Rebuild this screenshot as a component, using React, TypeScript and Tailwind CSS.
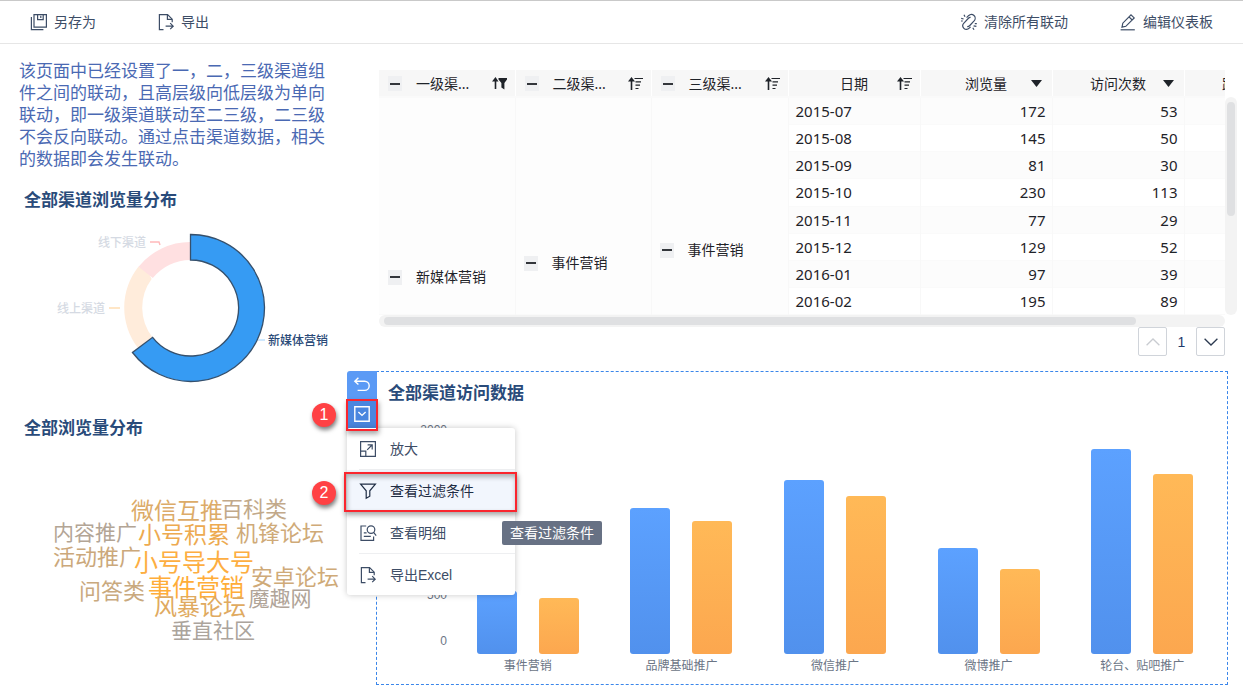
import React from 'react';

interface Row {
  date: string;
  views: number;
  visits: number;
}

interface Word {
  text: string;
  x: number;
  y: number;
  size: number;
  color: string;
}

const rows: Row[] = [
  { date: '2015-07', views: 172, visits: 53 },
  { date: '2015-08', views: 145, visits: 50 },
  { date: '2015-09', views: 81, visits: 30 },
  { date: '2015-10', views: 230, visits: 113 },
  { date: '2015-11', views: 77, visits: 29 },
  { date: '2015-12', views: 129, visits: 52 },
  { date: '2016-01', views: 97, visits: 39 },
  { date: '2016-02', views: 195, visits: 89 },
];

// bar heights in pixels
const channels = [
  { name: '事件营销', views: 63, visits: 56 },
  { name: '品牌基础推广', views: 146, visits: 133 },
  { name: '微信推广', views: 174, visits: 158 },
  { name: '微博推广', views: 106, visits: 85 },
  { name: '轮台、贴吧推广', views: 205, visits: 180 },
];

const words: Word[] = [
  { text: '微信互推', x: 177, y: 31, size: 23, color: '#dcab68' },
  { text: '百科类', x: 254, y: 29, size: 22, color: '#c2a98a' },
  { text: '内容推广', x: 95, y: 52, size: 21, color: '#b3a595' },
  { text: '小号积累', x: 184, y: 55, size: 23, color: '#edaa50' },
  { text: '机锋论坛', x: 280, y: 53, size: 22, color: '#cfaa78' },
  { text: '活动推广', x: 97, y: 77, size: 22, color: '#cba87b' },
  { text: '小号导大号', x: 194, y: 82, size: 24, color: '#fdae41' },
  { text: '安卓论坛', x: 295, y: 97, size: 22, color: '#cfaa78' },
  { text: '事件营销', x: 196, y: 107, size: 24, color: '#ffad38' },
  { text: '问答类', x: 112, y: 111, size: 22, color: '#c9a97e' },
  { text: '魔趣网', x: 280, y: 118, size: 21, color: '#b0a498' },
  { text: '风暴论坛', x: 200, y: 127, size: 23, color: '#e0aa60' },
  { text: '垂直社区', x: 213, y: 150, size: 21, color: '#aba49c' },
];

const iconProps = {
  width: 18,
  height: 18,
  viewBox: '0 0 18 18',
  fill: 'none',
  stroke: 'currentColor',
  strokeWidth: 1.2,
  'aria-hidden': true,
};

const SaveAsIcon = () => (
  <svg {...iconProps}>
    <path d="M4 1.6h12.4v12.6H4z" />
    <path d="M7.6 1.6v5h5.6v-5M10.8 2.8v2.2" />
    <path d="M1.4 4v12.6h12" />
  </svg>
);

const ExportIcon = () => (
  <svg {...iconProps}>
    <path d="M6.5 16.6H2.4V1.6h8.2l4.6 4.6v3" />
    <path d="M10.4 1.8v4.6h4.6" />
    <path d="M8.6 13.2h7.2M13.2 10.2l3 3-3 3" />
  </svg>
);

const UnlinkIcon = () => (
  <svg {...iconProps}>
    <path d="M6.6 4.6l1.9-1.9c1.6-1.5 4-1.6 5.5-.2s1.5 3.8.1 5.4l-4.3 4.6c-.9 1-1.7 1.3-2.6 1.2" />
    <path d="M10.6 13.8l-1.4 1.4c-1.5 1.5-3.9 1.5-5.3.1s-1.4-3.700 0-5.200l4.300-4.600c.8-.9 1.500-1.200 2.400-1.100" />
    <path d="M1.200 5.400l2.400.6M4 1.800l1 2M1 8h1.800M13.600 12.800l2.800.6M12.800 14.800l1.200 2M14.800 10.600h2" />
  </svg>
);

const EditIcon = () => (
  <svg {...iconProps}>
    <path d="M3 14.2l.8-4L12 1.8l3.2 3.1-8.4 8.4-3.8.9zM10 3.8l3.2 3.2" />
    <path d="M1.6 16.8h14.2" />
  </svg>
);

const EnlargeIcon = () => (
  <svg {...iconProps}>
    <path d="M1.6 11.2V1.6h14.8v14.8H6.8" />
    <path d="M1.6 11.2h5.2v5.2H1.6z" />
    <path d="M8.2 9.8l4.8-4.8M8.6 4.8h4.6v4.6" />
  </svg>
);

const FilterIcon = () => (
  <svg {...iconProps}>
    <path d="M1.600 2.200h14.800l-5.600 6.600v5.400l-3.600 2V8.800z" />
  </svg>
);

const DetailIcon = () => (
  <svg {...iconProps}>
    <path d="M7.2 2H2v14.4h12.6v-4" />
    <circle cx="12" cy="5.6" r="3.8" />
    <path d="M14.6 8.4l2.6 3.2M4.8 8.8h2.8M4.8 12.4h7" />
  </svg>
);

const SortIcon = () => (
  <svg width="15" height="13" viewBox="0 0 15 13" fill="none" stroke="#1f2329" aria-hidden="true">
    <path d="M3.5 13V3" strokeWidth="1.6" />
    <path d="M0 4.5L3.5 0 7 4.5z" fill="#1f2329" stroke="none" />
    <path d="M6.5 1.5H15M7.5 4.8H13M7.5 8.2H12M7.5 11.5H10.5" strokeWidth="1.2" />
  </svg>
);

const SortFilterIcon = () => (
  <svg width="15" height="13" viewBox="0 0 15 13" fill="#1f2329" aria-hidden="true">
    <path d="M0 4.5L3.5 0 6.5 4.5H4.3V12H2.7V4.5z" />
    <path d="M6.5 1H15v1.600L12.400 6v6.500L9.400 10.500V6L6.500 2.600z" />
  </svg>
);

const CaretIcon = () => (
  <svg width="11" height="7" viewBox="0 0 11 7" fill="#1f2329" className="mr-[2px]" aria-hidden="true">
    <path d="M0 0h11L5.500 7z" />
  </svg>
);

const Collapse = () => (
  <button aria-label="收起" className="flex h-[15px] w-[14px] shrink-0 items-center justify-center bg-[#eff0f2]">
    <span className="h-[2px] w-[10px] bg-[#33363b]" />
  </button>
);

const GroupHead = ({ label, icon }: { label: string; icon: React.ReactNode }) => (
  <th className="border-r border-white p-0 font-normal">
    <div className="flex items-center pt-px pr-2 pl-[9px]">
      <Collapse />
      <span className="ml-[14px]">{label}</span>
      <button aria-label="排序" className="ml-auto">{icon}</button>
    </div>
  </th>
);

const ValueHead = ({ label, icon }: { label: string; icon: React.ReactNode }) => (
  <th className="border-r border-white p-0 font-normal">
    <div className="grid grid-cols-[1fr_auto_1fr] items-center px-2 pt-px">
      <span />
      <span>{label}</span>
      <button aria-label="排序" className="justify-self-end">{icon}</button>
    </div>
  </th>
);

const DataTable = () => (
  <table className="h-[245px] w-[937px] table-fixed border-collapse text-sm text-[#1f2329]">
    <colgroup>
      <col className="w-[136px]" />
      <col className="w-[136px]" />
      <col className="w-[137px]" />
      <col className="w-[132px]" />
      <col className="w-[132px]" />
      <col className="w-[132px]" />
      <col className="w-[132px]" />
    </colgroup>
    <thead>
      <tr className="h-[27px] border-b-2 border-[#fafafa] bg-[#f7f7f7]">
        <GroupHead label="一级渠..." icon={<SortFilterIcon />} />
        <GroupHead label="二级渠..." icon={<SortIcon />} />
        <GroupHead label="三级渠..." icon={<SortIcon />} />
        <ValueHead label="日期" icon={<SortIcon />} />
        <ValueHead label="浏览量" icon={<CaretIcon />} />
        <ValueHead label="访问次数" icon={<CaretIcon />} />
        <ValueHead label="跳出次数" icon={<CaretIcon />} />
      </tr>
    </thead>
    <tbody>
      {rows.map((row, i) => (
        <tr key={row.date} className="border-b border-[#fafafa] odd:bg-[#fcfcfc]">
          {i === 0 && (
            <>
              <td rowSpan={8} className="border-r border-[#f8f8f8] bg-[#fdfdfd] p-0 pt-[169px] pl-[9px] align-top">
                <div className="flex items-center gap-[14px]"><Collapse />新媒体营销</div>
              </td>
              <td rowSpan={8} className="border-r border-[#f8f8f8] bg-[#fdfdfd] p-0 pt-[155px] pl-2 align-top">
                <div className="flex items-center gap-[14px]"><Collapse />事件营销</div>
              </td>
              <td rowSpan={8} className="border-r border-[#f8f8f8] bg-[#fdfdfd] p-0 pt-[142px] pl-2 align-top">
                <div className="flex items-center gap-[14px]"><Collapse />事件营销</div>
              </td>
            </>
          )}
          <td className="border-r border-[#f8f8f8] p-0 pl-[7px] text-[15px] leading-5">{row.date}</td>
          <td className="border-r border-[#f8f8f8] p-0 pr-[6px] text-right text-[15px] leading-5">{row.views}</td>
          <td className="border-r border-[#f8f8f8] p-0 pr-[6px] text-right text-[15px] leading-5">{row.visits}</td>
          <td className="p-0" />
        </tr>
      ))}
    </tbody>
  </table>
);

const DonutChart = () => (
  <svg width="345" height="180" viewBox="0 0 345 180" fontSize="12" className="block">
    <path d="M149 53.5 138.6 46.4A66 66 0 0 0 138 127.9L152.3 117A48 48 0 0 1 151.6 59z" fill="#ffecdb" />
    <path d="M138.6 46.8A66 66 0 0 1 190.5 22V40A48 48 0 0 0 152.8 58z" fill="#ffe0e1" />
    <path
      d="M190.5 14.5A73.5 73.5 0 1 1 132.5 132.5L152.6 117.3A48 48 0 1 0 190.5 40z"
      fill="#369bf3"
      stroke="#36506c"
      strokeWidth="1.3"
    />
    <g fill="none">
      <path d="M150 22h9l1 3" stroke="#ffb9ba" strokeWidth="1.4" />
      <path d="M109 88h11" stroke="#ffdcae" strokeWidth="1.4" />
      <path d="M258 120h7" stroke="#9fd0fb" />
    </g>
    <text x="98" y="27" fill="#d5dae3" fontWeight="500">线下渠道</text>
    <text x="57" y="93" fill="#d5dae3" fontWeight="500">线上渠道</text>
    <text x="268" y="125" fill="#2a4a78" fontWeight="500">新媒体营销</text>
  </svg>
);

const WordCloud = () => (
  <svg width="345" height="170" viewBox="0 0 345 170" className="block">
    {words.map((word) => (
      <text
        key={word.text}
        x={word.x}
        y={word.y}
        fontSize={word.size}
        fill={word.color}
        textAnchor="middle"
        dominantBaseline="central"
      >
        {word.text}
      </text>
    ))}
  </svg>
);

const BarChart = () => (
  <div className="flex pr-2">
    <div className="flex w-[70px] shrink-0 flex-col items-end pt-4 text-xs leading-4 text-[#6b7585]">
      <span className="mb-[149px]">2000</span>
      <span className="mb-[30px]">500</span>
      <span>0</span>
    </div>
    <div className="ml-1 flex flex-1">
      {channels.map((channel) => (
        <div key={channel.name} className="flex flex-1 flex-col items-center">
          <div className="flex h-[248px] items-end gap-[22px]">
            <div
              className="w-10 rounded-[3px] bg-linear-to-b from-[#5ca1ff] to-[#5191ed]"
              style={{ height: channel.views }}
            />
            <div
              className="w-10 rounded-[3px] bg-linear-to-b from-[#ffb957] to-[#fca74f]"
              style={{ height: channel.visits }}
            />
          </div>
          <span className="mt-1 text-xs leading-4 text-[#6b7585]">{channel.name}</span>
        </div>
      ))}
    </div>
  </div>
);

const MenuItem = ({ icon, label }: { icon: React.ReactNode; label: string }) => (
  <div className="ml-3 border-b border-[#eeeff1] last:border-b-0">
    <button className="flex h-[41px] w-full items-center gap-[13px] text-[#3d4d66]">
      {icon}
      {label}
    </button>
  </div>
);

const Marker = ({ value, className }: { value: number; className: string }) => (
  <span
    className={`absolute flex h-6 w-6 items-center justify-center rounded-full bg-[#ff4144] text-base leading-none text-white shadow-[1px_3px_4px_rgba(0,0,0,0.5)] ${className}`}
  >
    {value}
  </span>
);

const WidgetMenu = () => (
  <>
    <div className="absolute -top-px -left-[30px] w-[30px] rounded-tl-[3px] bg-[#5b9af5] text-white">
      <button aria-label="撤销" className="flex h-7 w-full items-center justify-center">
        <svg {...iconProps} strokeWidth="1.4">
          <path d="M5.4 1.8L1.8 5.2l3.6 3.4M2 5.2h9.6a4.6 4.6 0 0 1 0 9.2H4.6" />
        </svg>
      </button>
      <button aria-label="更多" className="flex h-[30px] w-full items-center justify-center bg-[#4a86df]">
        <svg {...iconProps} strokeWidth="1.4">
          <path d="M1.8 1.8h14.4v14.4H1.8zM5.4 7l3.6 3.4L12.6 7" />
        </svg>
      </button>
    </div>
    <div className="absolute top-14 -left-[30px] w-[168px] rounded-[3px] bg-white text-sm shadow-[0_0_6px_rgba(0,0,0,0.22)]">
      <MenuItem icon={<EnlargeIcon />} label="放大" />
      <button className="flex h-[42px] w-full items-center gap-[13px] bg-[#f2f6fd] pl-3 text-[#1f2d44]">
        <FilterIcon />
        查看过滤条件
      </button>
      <MenuItem icon={<DetailIcon />} label="查看明细" />
      <MenuItem icon={<ExportIcon />} label="导出Excel" />
    </div>
    <div className="pointer-events-none absolute top-[27px] -left-[31px] h-8 w-8 border-2 border-[#fa252e] shadow-[1px_3px_5px_rgba(0,0,0,0.35)]" />
    <div className="pointer-events-none absolute top-[100px] -left-[33px] h-10 w-[173px] border-2 border-[#fa252e] shadow-[1px_3px_5px_rgba(0,0,0,0.35),inset_1px_3px_5px_rgba(0,0,0,0.3)]" />
    <Marker value={1} className="top-[31px] -left-[65px]" />
    <Marker value={2} className="top-[109px] -left-[65px]" />
    <div role="tooltip" className="absolute top-[149px] left-[125px] rounded-xs bg-[#677184] px-2 py-[2px] text-sm text-white">
      查看过滤条件
    </div>
  </>
);

const App: React.FC = () => {
  return (
    <div className="min-h-screen bg-white font-['Liberation_Sans','Noto_Sans_CJK_SC',sans-serif]">
      <header className="flex h-11 items-center justify-between border-t border-b border-t-[#c9c9c9] border-b-[#e6e6e6] px-[30px] text-sm text-[#3d4d66]">
        <div className="flex gap-[61px]">
          <button className="flex items-center gap-[6px]"><SaveAsIcon />另存为</button>
          <button className="flex items-center gap-[6px]"><ExportIcon />导出</button>
        </div>
        <div className="flex gap-[51px]">
          <button className="flex items-center gap-[6px]"><UnlinkIcon />清除所有联动</button>
          <button className="flex items-center gap-[6px]"><EditIcon />编辑仪表板</button>
        </div>
      </header>

      <div className="flex">
        <aside className="w-[345px] shrink-0 pt-[17px]">
          <p className="pr-[18px] pl-[19px] text-[17px] leading-[22px] text-[#4a69b3]">
            该页面中已经设置了一，二，三级渠道组件之间的联动，且高层级向低层级为单向联动，即一级渠道联动至二三级，二三级不会反向联动。通过点击渠道数据，相关的数据即会发生联动。
          </p>
          <h2 className="mt-[18px] pl-6 text-[17px] leading-6 font-bold text-[#294b7a]">全部渠道浏览量分布</h2>
          <div className="mt-[7px]">
            <DonutChart />
          </div>
          <h2 className="mt-[17px] pl-6 text-[17px] leading-6 font-bold text-[#294b7a]">全部浏览量分布</h2>
          <div className="mt-[39px]">
            <WordCloud />
          </div>
        </aside>

        <main className="min-w-0 flex-1 pt-[26px] pr-[6px] pl-[31px]">
          <div className="ml-[3px] flex">
            <div className="min-w-0 flex-1">
              <div className="overflow-hidden font-['Noto_Sans','Noto_Sans_CJK_SC',sans-serif]">
                <DataTable />
              </div>
              <div className="h-3 rounded-full bg-[#f3f3f3] px-[5px] py-[2px]">
                <div className="h-2 w-[90%] rounded-full bg-[#dfe0e2]" />
              </div>
            </div>
            <div className="mt-[27px] mb-3 w-3 rounded-full bg-[#f3f3f3] px-[2px] py-[5px]">
              <div className="h-[114px] w-2 rounded-full bg-[#dfe0e2]" />
            </div>
          </div>

          <div className="mr-3 flex items-center justify-end text-sm text-[#1f3b6b]">
            <button aria-label="上一页" className="flex h-[29px] w-[29px] items-center justify-center rounded-xs border border-[#d0d4da] text-[#c9ccd1]">
              <svg width="14" height="8" viewBox="0 0 14 8" fill="none" stroke="currentColor" strokeWidth="1.3">
                <path d="M.6 7.2L7 1l6.4 6.2" />
              </svg>
            </button>
            <span className="w-[29px] text-center">1</span>
            <button aria-label="下一页" className="flex h-[29px] w-[29px] items-center justify-center rounded-xs border border-[#d0d4da] text-[#2c3a50]">
              <svg width="14" height="8" viewBox="0 0 14 8" fill="none" stroke="currentColor" strokeWidth="1.3">
                <path d="M.6.8L7 7 13.4.8" />
              </svg>
            </button>
          </div>

          <section className="relative mt-[15px] mr-[9px] border border-dashed border-[#3b86ea] pb-[10px]">
            <h2 className="pt-[10px] pl-[11px] text-[17px] leading-6 font-bold text-[#294b7a]">全部渠道访问数据</h2>
            <BarChart />
            <WidgetMenu />
          </section>
        </main>
      </div>
    </div>
  );
};

export default App;
